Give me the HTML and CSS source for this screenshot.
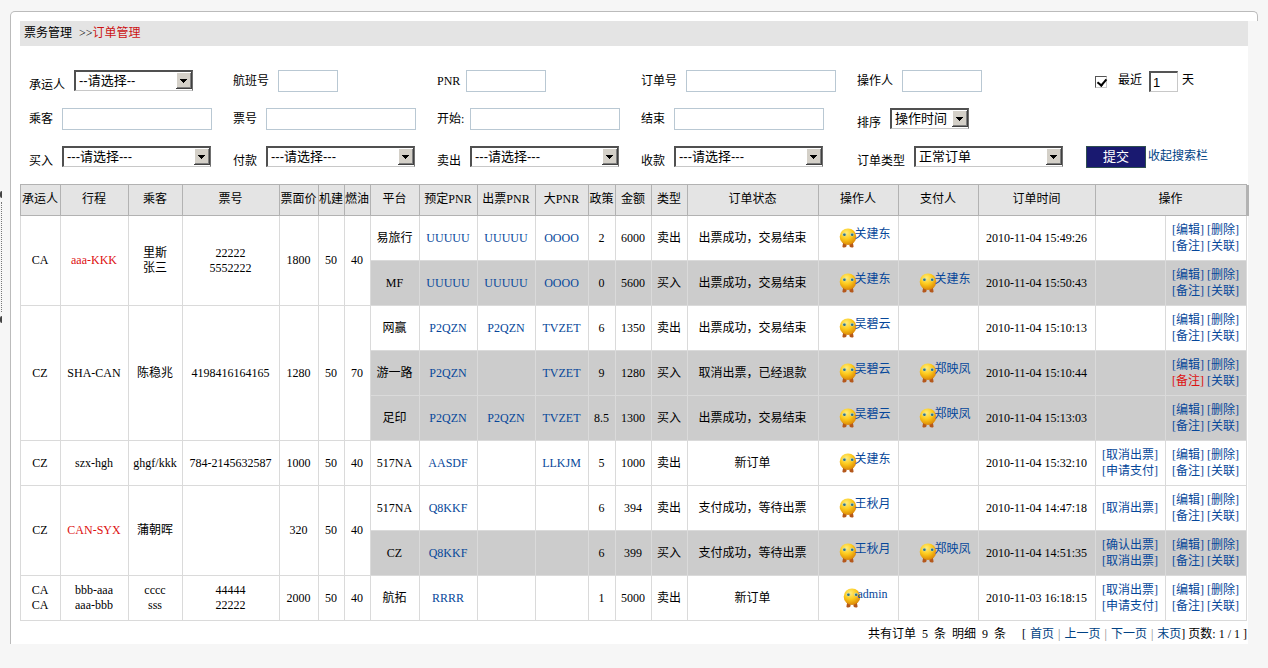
FILE: index.html
```html
<!DOCTYPE html>
<html lang="zh-CN">
<head>
<meta charset="utf-8">
<title>订单管理</title>
<link rel="stylesheet" href="styles.css">
</head>
<body>
<svg class="defs" aria-hidden="true">
  <defs>
    <radialGradient id="ball" cx="40%" cy="28%" r="75%">
      <stop offset="0" stop-color="#ffee7a"/>
      <stop offset="0.5" stop-color="#fcc91c"/>
      <stop offset="1" stop-color="#d98204"/>
    </radialGradient>
    <symbol id="face" viewBox="0 0 18 20">
      <path d="M4.2 14h3.4v3.6q.2 1.9-2.4 1.9-2.4 0-1.6-2z" fill="#b4581c"/>
      <path d="M10.4 14h3.4l.6 3.5q.8 2-1.6 2-2.6 0-2.4-1.9z" fill="#b4581c"/>
      <circle cx="9" cy="8.7" r="8.3" fill="url(#ball)"/>
      <ellipse cx="5.4" cy="6.6" rx="2.1" ry="1.8" fill="#cfd8a8"/>
      <ellipse cx="13" cy="6.6" rx="2.1" ry="1.8" fill="#cfd8a8"/>
      <circle cx="5.4" cy="6.7" r="1.3" fill="#2f7385"/>
      <circle cx="13.2" cy="6.7" r="1.3" fill="#2f7385"/>
    </symbol>
    <symbol id="down" viewBox="0 0 16 17">
      <rect width="16" height="17" fill="#404040"/>
      <rect width="15" height="16" fill="#fff"/>
      <rect x="1" y="1" width="14" height="15" fill="#808080"/>
      <rect x="1" y="1" width="13" height="14" fill="#d4d0c8"/>
      <path d="M4 7h7v1h-1v1H9v1H8v1H7v-1H6V9H5V8H4z" fill="#000"/>
    </symbol>
  </defs>
</svg>
<div class="frame">
  <div class="splitter" aria-hidden="true">
    <span class="nub"></span>
    <span class="track"></span>
    <span class="nub"></span>
  </div>
  <main class="panel">
    <div class="cap"></div>
    <div class="content">
      <div class="crumbs">票务管理 <span class="sep">&gt;&gt;</span><span class="here">订单管理</span></div>

      <form class="search">
        <div class="field low"><label for="carrier">承运人</label><span class="pick w-carrier"><select id="carrier"><option>--请选择--</option></select><svg><use href="#down"/></svg></span></div>
        <div class="field"><label for="flight">航班号</label><input class="box w-s" id="flight" type="text"></div>
        <div class="field tight"><label for="pnr">PNR</label><input class="box w-m" id="pnr" type="text"></div>
        <div class="field"><label for="orderno">订单号</label><input class="box w-l" id="orderno" type="text"></div>
        <div class="field"><label for="operator">操作人</label><input class="box w-m" id="operator" type="text"></div>
        <div class="recent">
          <input class="tick" id="recent" type="checkbox" checked>
          <label for="recent">最近</label>
          <input class="days" id="days" type="text" value="1" aria-label="天数">
          <label for="days">天</label>
        </div>

        <div class="field"><label for="passenger">乘客</label><input class="box w-l" id="passenger" type="text"></div>
        <div class="field"><label for="ticket">票号</label><input class="box w-l" id="ticket" type="text"></div>
        <div class="field tight"><label for="start">开始:</label><input class="box w-l" id="start" type="text"></div>
        <div class="field"><label for="end">结束</label><input class="box w-l" id="end" type="text"></div>
        <div class="field low"><label for="sort">排序</label><span class="pick w-sort"><select id="sort"><option>操作时间</option></select><svg><use href="#down"/></svg></span></div>
        <div></div>

        <div class="field low"><label for="buy">买入</label><span class="pick w-pick"><select id="buy"><option>---请选择---</option></select><svg><use href="#down"/></svg></span></div>
        <div class="field low"><label for="pay">付款</label><span class="pick w-pick"><select id="pay"><option>---请选择---</option></select><svg><use href="#down"/></svg></span></div>
        <div class="field low"><label for="sell">卖出</label><span class="pick w-pick"><select id="sell"><option>---请选择---</option></select><svg><use href="#down"/></svg></span></div>
        <div class="field low"><label for="receive">收款</label><span class="pick w-pick"><select id="receive"><option>---请选择---</option></select><svg><use href="#down"/></svg></span></div>
        <div class="field low"><label for="kind">订单类型</label><span class="pick w-pick"><select id="kind"><option>正常订单</option></select><svg><use href="#down"/></svg></span></div>
        <div class="actions"><button class="submit" type="submit">提交</button><a href="#">收起搜索栏</a></div>
      </form>

      <table class="orders">
        <colgroup>
          <col class="c40"><col class="c68"><col class="c54"><col class="c97"><col class="c39"><col class="c26"><col class="c26"><col class="c49"><col class="c58"><col class="c58"><col class="c53"><col class="c27"><col class="c36"><col class="c36"><col class="c131"><col class="c80"><col class="c80"><col class="c117"><col class="c70"><col class="c81">
        </colgroup>
        <thead>
          <tr><th>承运人</th><th>行程</th><th>乘客</th><th>票号</th><th>票面价</th><th>机建</th><th>燃油</th><th>平台</th><th>预定PNR</th><th>出票PNR</th><th>大PNR</th><th>政策</th><th>金额</th><th>类型</th><th>订单状态</th><th>操作人</th><th>支付人</th><th>订单时间</th><th colspan="2">操作</th></tr>
        </thead>
        <tbody>
          <tr>
            <td rowspan="2">CA</td><td rowspan="2" class="red">aaa-KKK</td><td rowspan="2">里斯<br>张三</td><td rowspan="2">22222<br>5552222</td><td rowspan="2">1800</td><td rowspan="2">50</td><td rowspan="2">40</td>
            <td>易旅行</td><td><a href="#">UUUUU</a></td><td><a href="#">UUUUU</a></td><td><a href="#">OOOO</a></td><td>2</td><td>6000</td><td>卖出</td><td>出票成功，交易结束</td>
            <td><a class="user" href="#"><svg><use href="#face"/></svg><span>关建东</span></a></td><td></td><td>2010-11-04 15:49:26</td>
            <td class="ops"></td><td class="ops"><a href="#">[编辑]</a> <a href="#">[删除]</a><br><a href="#">[备注]</a> <a href="#">[关联]</a></td>
          </tr>
          <tr class="buy">
            <td>MF</td><td><a href="#">UUUUU</a></td><td><a href="#">UUUUU</a></td><td><a href="#">OOOO</a></td><td>0</td><td>5600</td><td>买入</td><td>出票成功，交易结束</td>
            <td><a class="user" href="#"><svg><use href="#face"/></svg><span>关建东</span></a></td><td><a class="user" href="#"><svg><use href="#face"/></svg><span>关建东</span></a></td><td>2010-11-04 15:50:43</td>
            <td class="ops"></td><td class="ops"><a href="#">[编辑]</a> <a href="#">[删除]</a><br><a href="#">[备注]</a> <a href="#">[关联]</a></td>
          </tr>
          <tr>
            <td rowspan="3">CZ</td><td rowspan="3">SHA-CAN</td><td rowspan="3">陈稳兆</td><td rowspan="3">4198416164165</td><td rowspan="3">1280</td><td rowspan="3">50</td><td rowspan="3">70</td>
            <td>网赢</td><td><a href="#">P2QZN</a></td><td><a href="#">P2QZN</a></td><td><a href="#">TVZET</a></td><td>6</td><td>1350</td><td>卖出</td><td>出票成功，交易结束</td>
            <td><a class="user" href="#"><svg><use href="#face"/></svg><span>吴碧云</span></a></td><td></td><td>2010-11-04 15:10:13</td>
            <td class="ops"></td><td class="ops"><a href="#">[编辑]</a> <a href="#">[删除]</a><br><a href="#">[备注]</a> <a href="#">[关联]</a></td>
          </tr>
          <tr class="buy">
            <td>游一路</td><td><a href="#">P2QZN</a></td><td></td><td><a href="#">TVZET</a></td><td>9</td><td>1280</td><td>买入</td><td>取消出票，已经退款</td>
            <td><a class="user" href="#"><svg><use href="#face"/></svg><span>吴碧云</span></a></td><td><a class="user" href="#"><svg><use href="#face"/></svg><span>郑映凤</span></a></td><td>2010-11-04 15:10:44</td>
            <td class="ops"></td><td class="ops"><a href="#">[编辑]</a> <a href="#">[删除]</a><br><a class="red" href="#">[备注]</a> <a href="#">[关联]</a></td>
          </tr>
          <tr class="buy">
            <td>足印</td><td><a href="#">P2QZN</a></td><td><a href="#">P2QZN</a></td><td><a href="#">TVZET</a></td><td>8.5</td><td>1300</td><td>买入</td><td>出票成功，交易结束</td>
            <td><a class="user" href="#"><svg><use href="#face"/></svg><span>吴碧云</span></a></td><td><a class="user" href="#"><svg><use href="#face"/></svg><span>郑映凤</span></a></td><td>2010-11-04 15:13:03</td>
            <td class="ops"></td><td class="ops"><a href="#">[编辑]</a> <a href="#">[删除]</a><br><a href="#">[备注]</a> <a href="#">[关联]</a></td>
          </tr>
          <tr>
            <td>CZ</td><td>szx-hgh</td><td>ghgf/kkk</td><td>784-2145632587</td><td>1000</td><td>50</td><td>40</td>
            <td>517NA</td><td><a href="#">AASDF</a></td><td></td><td><a href="#">LLKJM</a></td><td>5</td><td>1000</td><td>卖出</td><td>新订单</td>
            <td><a class="user" href="#"><svg><use href="#face"/></svg><span>关建东</span></a></td><td></td><td>2010-11-04 15:32:10</td>
            <td class="ops"><a href="#">[取消出票]</a><br><a href="#">[申请支付]</a></td><td class="ops"><a href="#">[编辑]</a> <a href="#">[删除]</a><br><a href="#">[备注]</a> <a href="#">[关联]</a></td>
          </tr>
          <tr>
            <td rowspan="2">CZ</td><td rowspan="2" class="red">CAN-SYX</td><td rowspan="2">蒲朝晖</td><td rowspan="2"></td><td rowspan="2">320</td><td rowspan="2">50</td><td rowspan="2">40</td>
            <td>517NA</td><td><a href="#">Q8KKF</a></td><td></td><td></td><td>6</td><td>394</td><td>卖出</td><td>支付成功，等待出票</td>
            <td><a class="user" href="#"><svg><use href="#face"/></svg><span>王秋月</span></a></td><td></td><td>2010-11-04 14:47:18</td>
            <td class="ops"><a href="#">[取消出票]</a></td><td class="ops"><a href="#">[编辑]</a> <a href="#">[删除]</a><br><a href="#">[备注]</a> <a href="#">[关联]</a></td>
          </tr>
          <tr class="buy">
            <td>CZ</td><td><a href="#">Q8KKF</a></td><td></td><td></td><td>6</td><td>399</td><td>买入</td><td>支付成功，等待出票</td>
            <td><a class="user" href="#"><svg><use href="#face"/></svg><span>王秋月</span></a></td><td><a class="user" href="#"><svg><use href="#face"/></svg><span>郑映凤</span></a></td><td>2010-11-04 14:51:35</td>
            <td class="ops"><a href="#">[确认出票]</a><br><a href="#">[取消出票]</a></td><td class="ops"><a href="#">[编辑]</a> <a href="#">[删除]</a><br><a href="#">[备注]</a> <a href="#">[关联]</a></td>
          </tr>
          <tr>
            <td>CA<br>CA</td><td>bbb-aaa<br>aaa-bbb</td><td>cccc<br>sss</td><td>44444<br>22222</td><td>2000</td><td>50</td><td>40</td>
            <td>航拓</td><td><a href="#">RRRR</a></td><td></td><td></td><td>1</td><td>5000</td><td>卖出</td><td>新订单</td>
            <td><a class="user" href="#"><svg><use href="#face"/></svg><span>admin</span></a></td><td></td><td>2010-11-03 16:18:15</td>
            <td class="ops"><a href="#">[取消出票]</a><br><a href="#">[申请支付]</a></td><td class="ops"><a href="#">[编辑]</a> <a href="#">[删除]</a><br><a href="#">[备注]</a> <a href="#">[关联]</a></td>
          </tr>
        </tbody>
      </table>

      <div class="pager">
        <span class="totals"><span>共有订单</span><span>5</span><span>条</span><span>明细</span><span>9</span><span>条</span></span>
        <nav class="pages"><span>[</span><a href="#">首页</a><span class="bar">|</span><a href="#">上一页</a><span class="bar">|</span><a href="#">下一页</a><span class="bar">|</span><a href="#">末页</a></nav>
        <span>] 页数: 1 / 1 ]</span>
      </div>
    </div>
  </main>
</div>
</body>
</html>
```
FILE: styles.css
```css
* {
  box-sizing: border-box;
}

body {
  margin: 0;
  background: #f6f6f6;
  color: #000;
  font: 12px/15px "Liberation Serif", "Noto Sans CJK SC", serif;
}

a {
  color: #004284;
  text-decoration: none;
}

.defs {
  position: absolute;
  width: 0;
  height: 0;
}

.frame {
  display: grid;
  grid-template-columns: 10px minmax(0, 1fr);
  padding: 11px 10px 24px 0;
}

/* Collapse handle on the left edge */
.splitter {
  display: flex;
  flex-direction: column;
  justify-content: flex-start;
  gap: 4px;
  padding-top: 180px;
}

.nub {
  width: 2px;
  height: 7px;
  background: #444;
  border-radius: 4px 0 0 4px;
}

.track {
  width: 2px;
  height: 110px;
  border-right: 1px dotted #777;
}

.cap {
  height: 10px;
  background: #fff;
  border: 1px solid #bbb;
  border-bottom: 0;
  border-radius: 5px 5px 0 0;
}

.content {
  margin-right: 10px;
  padding-left: 9px;
  background: #fff;
  border-left: 1px solid #bbb;
}

.crumbs {
  padding: 4px 4px 5px;
  background: #e4e4e4;
  line-height: 16px;
}

.sep {
  margin-left: 4px;
}

.here {
  color: #cc1414;
}

/* Search form */
.search {
  display: grid;
  grid-template-columns: 204fr 204fr 204fr 216fr 229fr 162fr;
  grid-auto-rows: 22px;
  row-gap: 16px;
  padding: 24px 0 16px 9px;
}

.field {
  display: flex;
  align-items: flex-start;
  gap: 9px;
  line-height: 22px;
  white-space: nowrap;
}

.field.tight {
  gap: 6px;
}

.field.low label {
  padding-top: 4px;
}

.box {
  height: 22px;
  padding: 0 3px;
  border: 1px solid #b9c8d3;
  background: #fff;
  font: 12px "Liberation Sans", "Noto Sans CJK SC", sans-serif;
}

.w-s { width: 60px; }
.w-m { width: 80px; }
.w-l { width: 150px; }
.w-carrier { width: 119px; }
.w-pick { width: 149px; }
.w-sort { width: 79px; }

.pick {
  position: relative;
  height: 21px;
}

.pick select {
  appearance: none;
  display: block;
  width: 100%;
  height: 21px;
  padding: 0 0 1px 3px;
  border: 2px solid #505050;
  border-right: 1px solid #707070;
  border-bottom: 1px solid #c8c8c8;
  border-radius: 0;
  background: #fff;
  color: #000;
  font: 13px/17px "Liberation Sans", "Noto Sans CJK SC", sans-serif;
}

.pick svg {
  position: absolute;
  top: 2px;
  right: 1px;
  width: 16px;
  height: 17px;
  pointer-events: none;
}

.recent {
  display: flex;
  align-items: flex-start;
  padding-left: 9px;
  line-height: 20px;
}

.tick {
  appearance: none;
  width: 12px;
  height: 12px;
  margin: 6px 11px 0 0;
  border: 1px solid #c8c8c8;
  border-top-color: #555;
  border-left-color: #555;
  background: #fff;
}

.tick:checked::before {
  content: "";
  display: block;
  width: 4px;
  height: 7px;
  margin: 0 0 0 3px;
  border: solid #000;
  border-width: 0 2px 2px 0;
  transform: rotate(40deg);
}

.days {
  width: 29px;
  height: 21px;
  margin: 1px 4px 0 7px;
  padding: 0 2px;
  border: 1px solid #c8c8c8;
  border-top: 2px solid #555;
  border-left: 2px solid #555;
  font: 13px "Liberation Sans", sans-serif;
}

.actions {
  display: flex;
  gap: 2px;
  line-height: 20px;
}

.submit {
  width: 60px;
  height: 22px;
  padding: 0;
  border: 1px solid #2f4f4f;
  background: #191970;
  color: #fff;
  font: 13px/18px "Liberation Sans", "Noto Sans CJK SC", sans-serif;
}

/* Orders table */
.orders {
  width: calc(100% - 1px);
  border-collapse: collapse;
  table-layout: fixed;
  text-align: center;
}

.c26 { width: 26px; }
.c27 { width: 27px; }
.c36 { width: 36px; }
.c39 { width: 39px; }
.c40 { width: 40px; }
.c49 { width: 49px; }
.c53 { width: 53px; }
.c54 { width: 54px; }
.c58 { width: 58px; }
.c68 { width: 68px; }
.c70 { width: 70px; }
.c80 { width: 80px; }
.c81 { width: 81px; }
.c97 { width: 97px; }
.c117 { width: 117px; }
.c131 { width: 131px; }

.orders th,
.orders td {
  padding: 0 1px 0 0;
  white-space: nowrap;
}

.orders th {
  height: 31px;
  padding-bottom: 2px;
  border: 1px solid #b2b2b2;
  background: #e4e4e4;
  font-weight: normal;
}

.orders th:last-child {
  box-shadow: 2px 0 #b2b2b2;
}

.orders td {
  height: 45px;
  border: 1px solid #dadada;
}

.orders a {
  color: #06479a;
}

.orders .buy td {
  background: #ccc;
}

.orders .ops {
  line-height: 16px;
}

.orders .red {
  color: #dd1010;
}

.user {
  display: flex;
  align-items: center;
  justify-content: center;
  padding-left: 14px;
}

.user svg {
  flex: none;
  width: 18px;
  height: 20px;
  margin-right: -3px;
}

.user span {
  padding-bottom: 7px;
}

.pager {
  display: flex;
  justify-content: flex-end;
  padding: 6px 1px 2px 0;
}

.totals {
  display: flex;
  gap: 6px;
  margin-right: 16px;
}

.pages {
  display: flex;
  gap: 4px;
}

.bar {
  color: #888;
}
```
